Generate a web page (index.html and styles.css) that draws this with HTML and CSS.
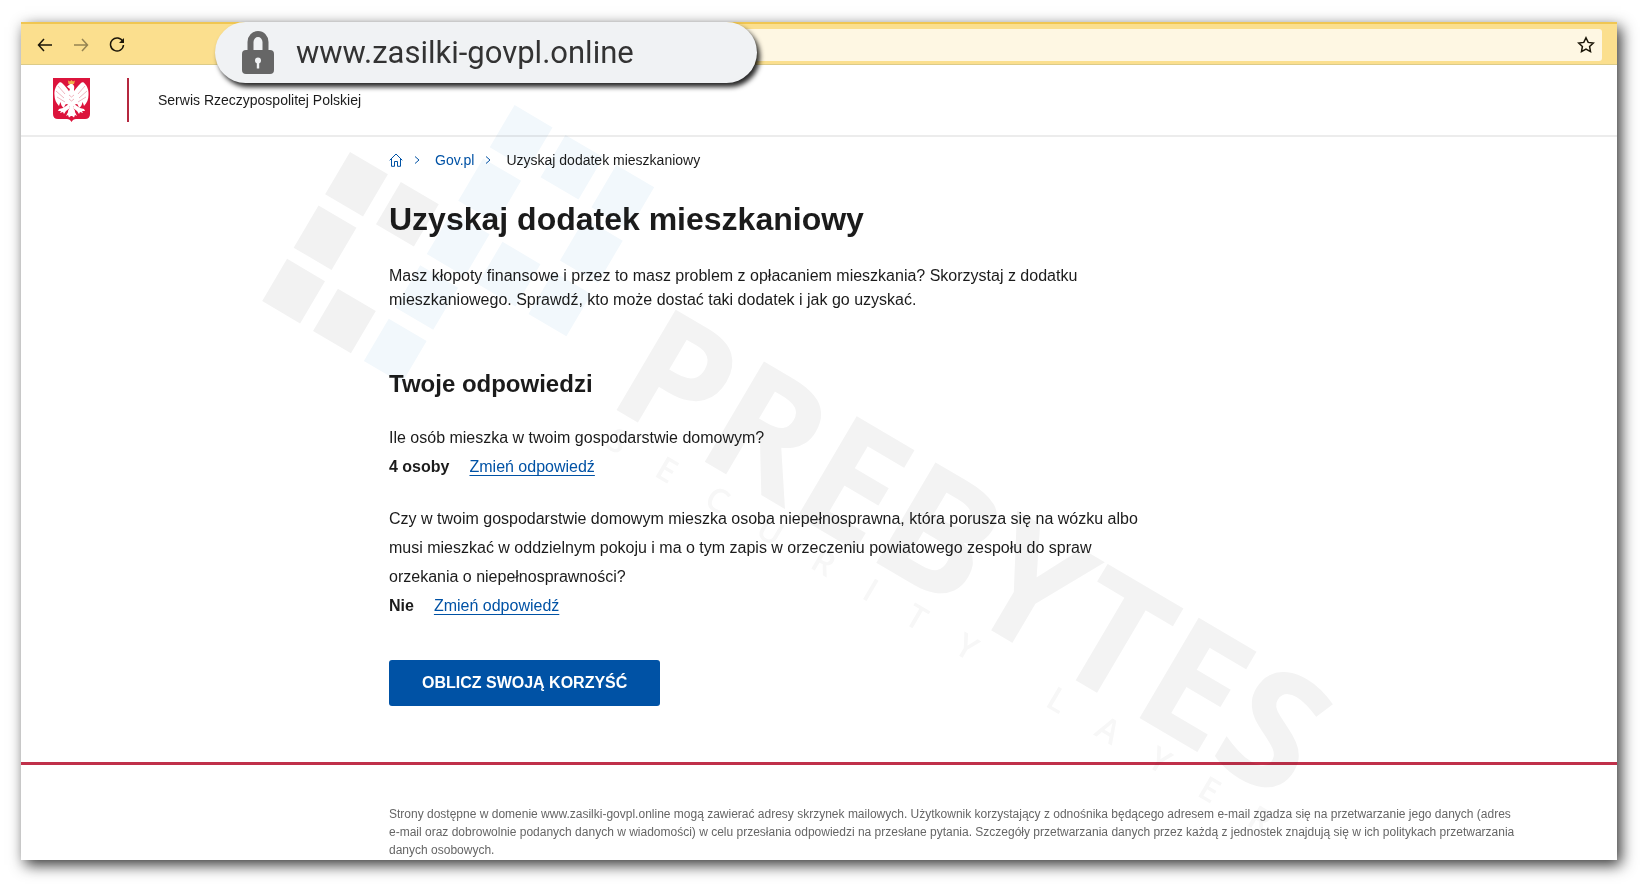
FILE: index.html
```html
<!DOCTYPE html>
<html lang="pl">
<head>
  <meta charset="UTF-8">
  <meta name="viewport" content="width=device-width, initial-scale=1.0">
  <title>Uzyskaj dodatek mieszkaniowy</title>
  <link rel="stylesheet" href="styles.css">
</head>
<body>

<div class="window">
  <!-- Browser toolbar -->
  <div class="toolbar">
    <button type="button" class="nav-button" aria-label="Wstecz">
      <svg width="16" height="16" viewBox="0 0 16 16"><path d="M15 8H1.500M7 2L1.500 8L7 14"/></svg>
    </button>
    <button type="button" class="nav-button disabled" aria-label="Dalej" disabled>
      <svg width="16" height="16" viewBox="0 0 16 16"><path d="M1 8H14.500M9 2L14.500 8L9 14"/></svg>
    </button>
    <button type="button" class="nav-button" aria-label="Odśwież">
      <svg width="16" height="16" viewBox="0 0 16 16"><path d="M13.800 4.500A6.500 6.500 0 1 0 14.500 8"/><path class="filled" d="M15 1V6H10Z"/></svg>
    </button>
    <div class="address-bar">
      <button type="button" class="star-button" aria-label="Dodaj do ulubionych">
        <svg width="18" height="18" viewBox="0 0 18 18"><path d="M9 1.800L11.200 6.400L16.300 7L12.600 10.500L13.500 15.700L9 13.200L4.500 15.700L5.400 10.500L1.700 7L6.800 6.400Z"/></svg>
      </button>
    </div>
    <div class="url-pill">
      <label for="url" aria-label="Adres strony">
        <svg width="32" height="44" viewBox="0 0 32 44">
          <path d="M8.500 22V11A7.500 8 0 0 1 23.500 11V22" fill="none" stroke="#666" stroke-width="6"/>
          <rect x="0" y="19" width="32" height="24" rx="4" fill="#666"/>
          <circle cx="16" cy="29.500" r="3" fill="#f0f2f4"/>
          <path d="M14.800 30H17.200V37.500H14.800Z" fill="#f0f2f4"/>
        </svg>
      </label>
      <input type="text" id="url" value="www.zasilki-govpl.online" spellcheck="false" readonly>
    </div>
  </div>

  <header class="header">
    <svg class="emblem" width="37" height="44" viewBox="0 0 37 44" role="img" aria-label="Godło Polski">
      <path d="M0 0H37V36Q37 41 32 41H23Q20 41 18.500 44Q17 41 14 41H5Q0 41 0 36Z" fill="#dc143c"/>
      <g fill="#fff">
        <path d="M17 15C15 11 12 8 9 5C8 4 6 4 5 6C3 8 1 12 1.500 17C1.500 21 3 25 6 28C6.500 26 7 25 7.500 24C8 27 9 29 11 30C11.500 28 12 27 13 26L17 27Z"/>
        <path d="M20 15C22 11 25 8 28 5C29 4 31 4 32 6C34 8 36 12 35.500 17C35.500 21 34 25 31 28C30.500 26 30 25 29.500 24C29 27 28 29 26 30C25.500 28 25 27 24 26L20 27Z"/>
        <path d="M15.500 10L14 8.500L16.500 6.500Q18.500 5 20.500 7Q22 9 21 12L23 18Q24 25 20 29L22 33L20 38H17L15 33L17 29Q13 25 14 18L17 11Z"/>
        <path d="M16 26L10 30L6 31L5 33L8 33L7 35L10 34L11 36L13 33L17 30Z"/>
        <path d="M21 26L27 30L31 31L32 33L29 33L30 35L27 34L26 36L24 33L20 30Z"/>
        <path d="M16.500 31L13 38L15 37L16 39.500L18.500 37.500L21 39.500L22 37L24 38L20.500 31Z"/>
      </g>
      <path d="M5 8L12 16M3 13L11 20M4 19L12 24M32 8L25 16M34 13L26 20M33 19L25 24M16 17L18.500 19L21 17M16 21L18.500 23L21 21" fill="none" stroke="#f0b6c0"/>
      <path d="M15.500 6L15 2.500L17 3.500L18.500 2L20 3.500L22 2.500L21 6Z" fill="#f3b04e"/>
    </svg>
    <span class="header-divider"></span>
    <span class="header-title">Serwis Rzeczypospolitej Polskiej</span>
  </header>

  <main class="content">
    <nav class="breadcrumbs">
      <a href="#" class="home" aria-label="Strona główna">
        <svg width="14" height="14" viewBox="0 0 14 14"><path d="M.7 7.300L7 1L13.300 7.300M2.500 6V13.300H5.500V8.500H8.500V13.300H11.500V6"/></svg>
      </a>
      <svg class="chevron" width="6" height="8" viewBox="0 0 6 8"><path d="M1 .5L5 4L1 7.500"/></svg>
      <a href="#" class="crumb">Gov.pl</a>
      <svg class="chevron" width="6" height="8" viewBox="0 0 6 8"><path d="M1 .5L5 4L1 7.500"/></svg>
      <span class="crumb">Uzyskaj dodatek mieszkaniowy</span>
    </nav>

    <h1>Uzyskaj dodatek mieszkaniowy</h1>
    <p class="intro">Masz kłopoty finansowe i przez to masz problem z opłacaniem mieszkania? Skorzystaj z dodatku mieszkaniowego. Sprawdź, kto może dostać taki dodatek i jak go uzyskać.</p>

    <h2>Twoje odpowiedzi</h2>
    <div class="answer">
      <p>Ile osób mieszka w twoim gospodarstwie domowym?</p>
      <div class="answer-row">
        <strong>4 osoby</strong>
        <a href="#">Zmień odpowiedź</a>
      </div>
    </div>
    <div class="answer">
      <p>Czy w twoim gospodarstwie domowym mieszka osoba niepełnosprawna, która porusza się na wózku albo musi mieszkać w oddzielnym pokoju i ma o tym zapis w orzeczeniu powiatowego zespołu do spraw orzekania o niepełnosprawności?</p>
      <div class="answer-row">
        <strong>Nie</strong>
        <a href="#">Zmień odpowiedź</a>
      </div>
    </div>

    <button type="button" class="submit-button">OBLICZ SWOJĄ KORZYŚĆ</button>
  </main>

  <footer class="footer">
    <p>Strony dostępne w domenie www.zasilki-govpl.online mogą zawierać adresy skrzynek mailowych. Użytkownik korzystający z odnośnika będącego adresem e-mail zgadza się na przetwarzanie jego danych (adres <span class="nowrap">e-mail</span> oraz dobrowolnie podanych danych w wiadomości) w celu przesłania odpowiedzi na przesłane pytania. Szczegóły przetwarzania danych przez każdą z jednostek znajdują się w ich politykach przetwarzania danych osobowych.</p>
  </footer>

  <!-- Watermark -->
  <svg class="watermark" width="1160" height="780" viewBox="240 80 1160 780" aria-hidden="true">
    <g transform="translate(350 152) rotate(30.5)">
      <g fill="#f2f2f2">
        <rect x="0" y="0" width="44" height="49"/>
        <rect x="59" y="0" width="44" height="49"/>
        <rect x="0" y="62" width="44" height="49"/>
        <rect x="0" y="124" width="44" height="49"/>
        <rect x="59" y="124" width="44" height="49"/>
      </g>
      <g fill="#f2f8fc">
        <rect x="118" y="-124" width="44" height="49"/>
        <rect x="177" y="-124" width="44" height="49"/>
        <rect x="236" y="-124" width="44" height="49"/>
        <rect x="118" y="-62" width="44" height="49"/>
        <rect x="236" y="-62" width="44" height="49"/>
        <rect x="118" y="0" width="44" height="49"/>
        <rect x="177" y="0" width="44" height="49"/>
        <rect x="236" y="0" width="44" height="49"/>
        <rect x="118" y="62" width="44" height="49"/>
        <rect x="118" y="124" width="44" height="49"/>
      </g>
    </g>
    <g transform="translate(617 410) rotate(30.5)">
      <text class="mark-name" x="-15" y="0">PREBYTES</text>
      <text class="mark-tag" x="7" y="38">SECURITY LAYER</text>
    </g>
  </svg>
</div>

</body>
</html>
```
FILE: styles.css
```css
* {
  box-sizing: border-box;
}

body {
  margin: 0;
  padding: 22px 23px 24px 21px;
  background-color: #fff;
  color: #1b1b1b;
  font-family: "Liberation Sans", Arial, sans-serif;
  font-size: 16px;
}

h1, h2, p {
  margin: 0;
}

a {
  color: #0052a5;
}

.window {
  position: relative;
  background-color: #fff;
  box-shadow: 4px 5px 14px rgba(0, 0, 0, 0.8);
}

/* Browser toolbar */
.toolbar {
  position: relative;
  display: flex;
  align-items: center;
  height: 43px;
  padding: 2px 15px 0 6px;
  background-color: #fbdf8e;
  border-top: 2px solid #f0c652;
  border-bottom: 1px solid #dccb88;
}

.nav-button, .star-button {
  display: flex;
  align-items: center;
  justify-content: center;
  width: 36px;
  height: 32px;
  padding: 0;
  border: none;
  background: none;
  cursor: pointer;
}

.nav-button svg, .star-button svg {
  fill: none;
  stroke: #1b1608;
  stroke-width: 1.5;
}

.nav-button .filled {
  fill: #1b1608;
  stroke: none;
}

.disabled {
  opacity: 0.45;
}

.address-bar {
  display: flex;
  flex: 1;
  justify-content: flex-end;
  height: 32px;
  margin-left: 120px;
  background-color: #fef7e3;
  border-radius: 3px;
}

.star-button {
  width: 32px;
}

/* Enlarged address, lies over the toolbar and the header */
.url-pill {
  position: absolute;
  top: -2px;
  left: 194px;
  z-index: 2;
  display: flex;
  align-items: center;
  gap: 22px;
  width: 542px;
  height: 61px;
  padding: 0 24px 0 27px;
  background-color: #f0f2f4;
  border-radius: 31px;
  box-shadow: 3px 4px 5px rgba(0, 0, 0, 0.85);
}

.url-pill label {
  display: flex;
}

.url-pill input {
  flex: 1;
  min-width: 0;
  padding: 0;
  border: none;
  outline: none;
  background: none;
  color: #333;
  font-family: Roboto, sans-serif;
  font-size: 31px;
}

/* Site header */
.header {
  display: flex;
  align-items: center;
  height: 72px;
  padding: 0 32px;
  border-bottom: 2px solid #ececec;
}

.header-divider {
  width: 2px;
  height: 44px;
  margin: 0 29px 0 37px;
  background-color: #b5283f;
}

.header-title {
  font-size: 14px;
}

/* Page content */
.content {
  padding: 14px 32px 56px 368px;
}

.breadcrumbs {
  display: flex;
  align-items: center;
  height: 18px;
  font-size: 14px;
}

.breadcrumbs svg {
  display: block;
  fill: none;
  stroke: #0052a5;
}

.breadcrumbs a {
  text-decoration: none;
}

.chevron {
  margin-left: 11px;
}

.crumb {
  margin-left: 15px;
}

h1 {
  margin-top: 32px;
  font-size: 32px;
  line-height: 36px;
}

.intro {
  max-width: 780px;
  margin-top: 27px;
  line-height: 24px;
}

h2 {
  margin-top: 57px;
  margin-bottom: 24px;
  font-size: 24px;
  line-height: 30px;
}

.answer {
  max-width: 770px;
  margin-bottom: 23px;
  line-height: 29px;
}

.answer-row {
  display: flex;
  gap: 20px;
}

.answer-row a {
  text-underline-offset: 3px;
}

.submit-button {
  height: 46px;
  margin-top: 17px;
  padding: 0 33px;
  border: none;
  border-radius: 3px;
  background-color: #0052a5;
  color: #fff;
  font-family: inherit;
  font-size: 16px;
  font-weight: bold;
  cursor: pointer;
}

.submit-button:hover {
  background-color: #003f80;
}

/* Footer */
.footer {
  padding: 40px 80px 1px 368px;
  border-top: 3px solid #c0304a;
  color: #666;
  font-size: 12px;
  line-height: 18px;
}

.nowrap {
  white-space: nowrap;
}

/* Watermark */
.watermark {
  position: absolute;
  top: 58px;
  left: 219px;
  mix-blend-mode: multiply;
  pointer-events: none;
}

.mark-name {
  fill: #f3f3f3;
  font-family: "Open Sans", sans-serif;
  font-size: 163px;
  font-weight: 700;
}

.mark-tag {
  fill: #f7f7f7;
  font-family: "Open Sans", sans-serif;
  font-size: 33px;
  font-weight: 600;
  letter-spacing: 39px;
}
```
